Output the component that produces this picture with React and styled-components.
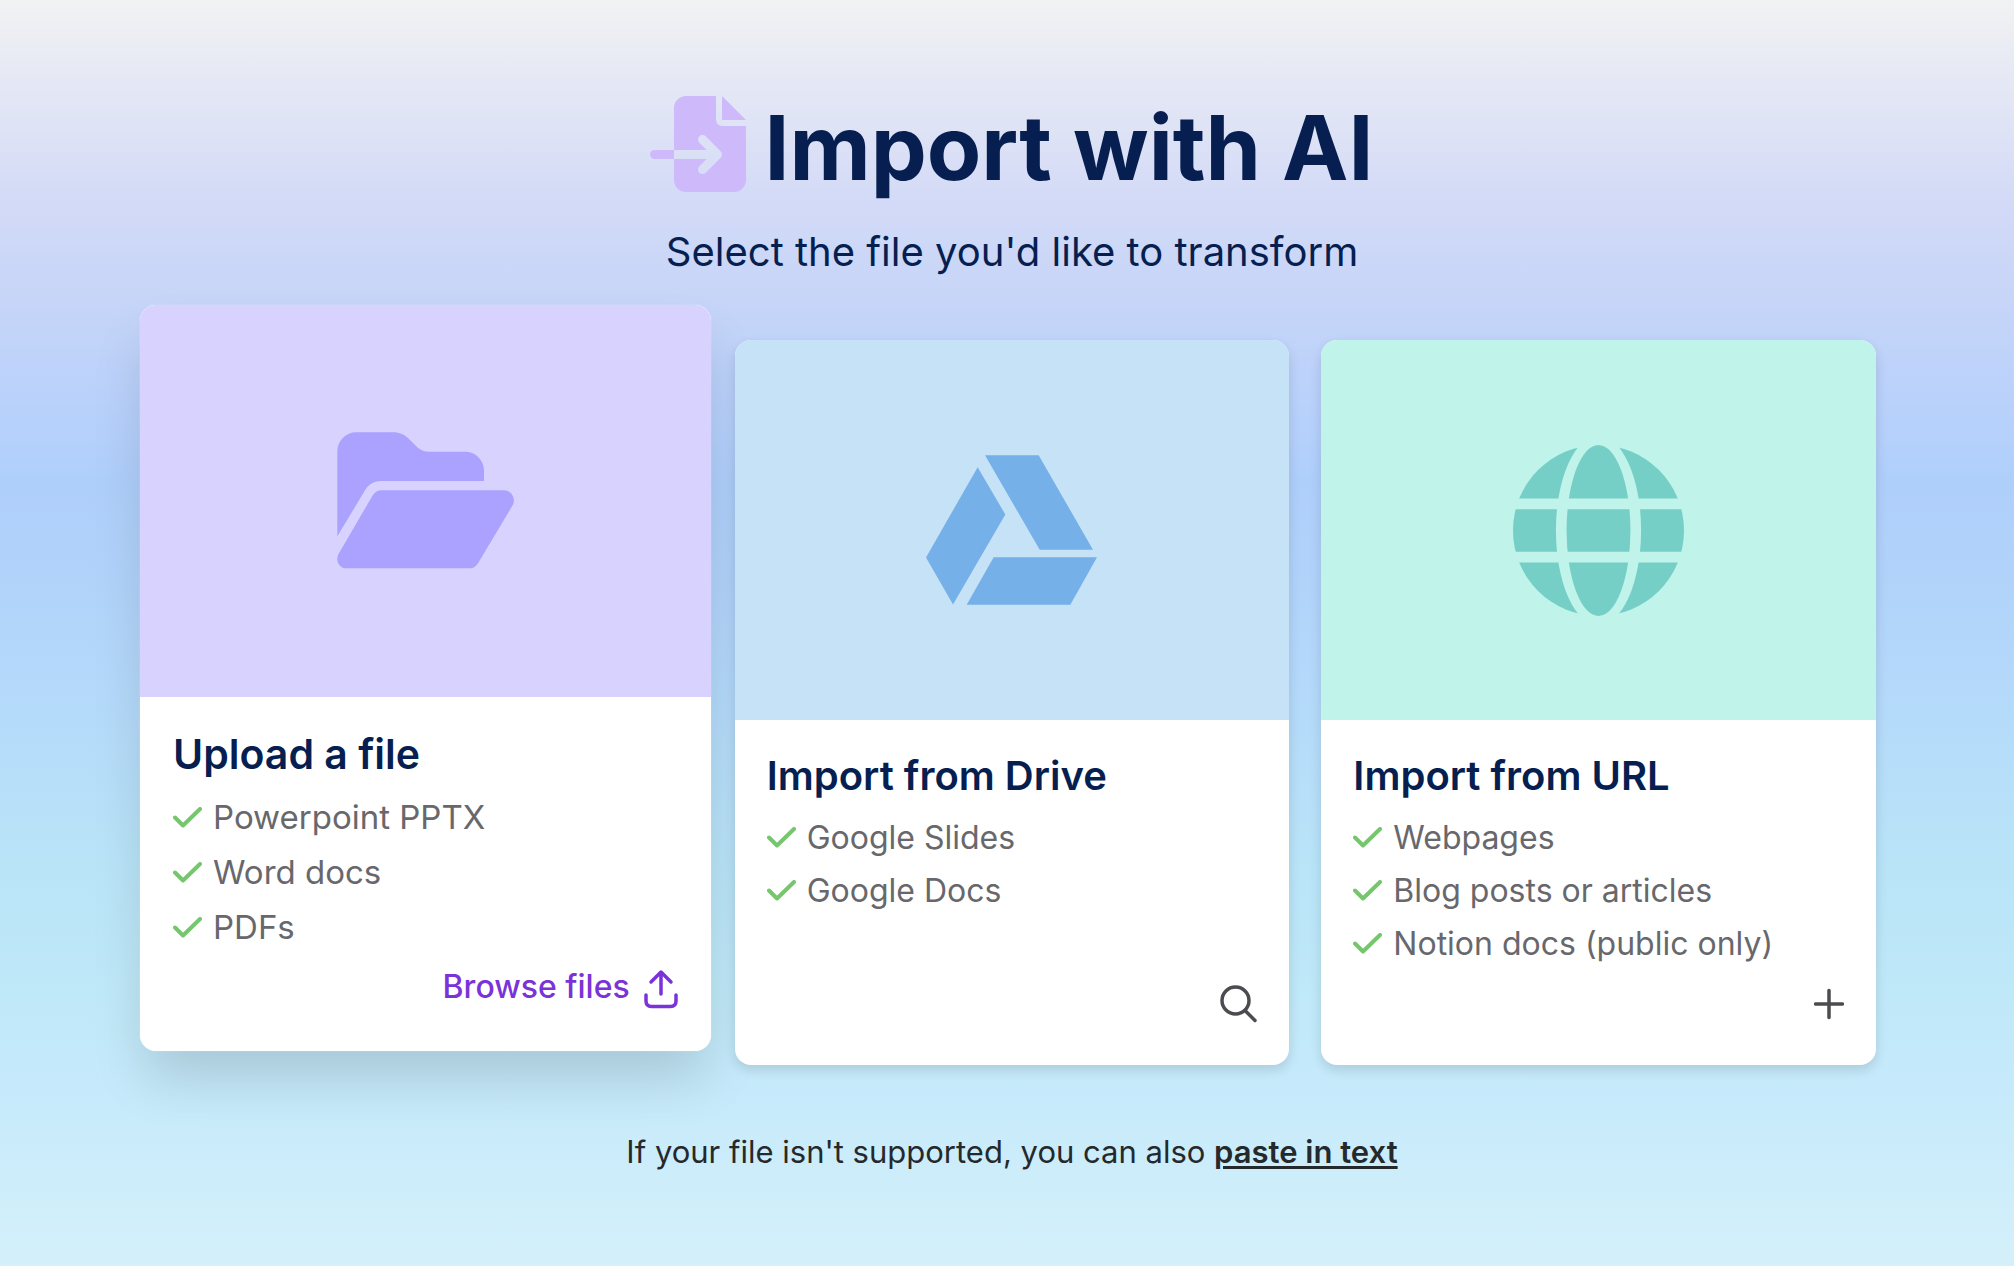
import React from 'react';
import styled, { createGlobalStyle } from 'styled-components';

const GlobalStyle = createGlobalStyle`
  *, *::before, *::after { box-sizing: border-box; }
  body {
    margin: 0;
    font-family: Inter, "Liberation Sans", sans-serif;
    color: #061f50;
  }
`;

const Page = styled.div`
  min-height: 100vh;
  padding: 96px 138px 64px 148px;
  background: linear-gradient(
    180deg,
    #f1f2f3 0%,
    #d3daf7 16%,
    #c4d4f8 25%,
    #b7d1fc 33%,
    #afcffb 38%,
    #b1d3fa 46%,
    #b5dbfa 57%,
    #b9e4f8 68%,
    #bee8f8 77%,
    #c6eafb 86%,
    #d4f0fa 100%
  );
`;

const Header = styled.header`
  display: flex;
  flex-direction: column;
  align-items: center;
  gap: 28px;
`;

const TitleRow = styled.div`
  display: flex;
  align-items: flex-start;
  gap: 18px;
`;

const Title = styled.h1`
  margin: 0;
  font-size: 89px;
  font-weight: 700;
  line-height: 104px;
`;

const Subtitle = styled.p`
  margin: 0;
  font-size: 40px;
  line-height: 48px;
`;

const Cards = styled.main`
  display: grid;
  grid-template-columns: repeat(3, minmax(0, 1fr));
  gap: 32px;
  margin-top: 64px;
`;

const Card = styled.section`
  display: flex;
  flex-direction: column;
  overflow: hidden;
  margin: ${(p) => (p.$raised ? '-35px -8px 14px' : '0')};
  background: #fff;
  border-radius: 16px;
  box-shadow: ${(p) =>
    p.$raised
      ? '0 0 1px rgba(255, 255, 255, 0.9), 0 32px 54px -6px rgba(0, 0, 0, 0.15)'
      : '0 5px 12px rgba(0, 0, 0, 0.13)'};
`;

const Artwork = styled.div`
  display: flex;
  align-items: center;
  justify-content: center;
  height: ${(p) => (p.$raised ? 392 : 380)}px;
  background: ${(p) => p.$color};
`;

const Body = styled.div`
  display: flex;
  flex: 1;
  flex-direction: column;
  padding: ${(p) => (p.$raised ? '32px 33px 42px' : '32px 32px 40px')};
`;

const CardTitle = styled.h2`
  margin: 0;
  font-size: ${(p) => (p.$raised ? 41 : 40)}px;
  font-weight: 600;
  line-height: ${(p) => (p.$raised ? 50 : 48)}px;
`;

const Formats = styled.ul`
  margin: 11px 0 ${(p) => (p.$raised ? 10 : 11)}px;
  padding: 0;
  list-style: none;
  color: #68686c;
  font-size: ${(p) => (p.$raised ? 33 : 32)}px;
  line-height: ${(p) => (p.$raised ? 55 : 53)}px;
`;

const Format = styled.li`
  display: flex;
  align-items: center;
  gap: 11px;
`;

const Action = styled.button`
  display: flex;
  align-items: center;
  align-self: flex-end;
  gap: 14px;
  margin-top: auto;
  padding: 0;
  border: 0;
  background: none;
  color: ${(p) => (p.$raised ? '#7a33d9' : '#4c4b4f')};
  font: inherit;
  font-size: 32px;
  font-weight: 500;
  line-height: 44px;
  height: 44px;
  cursor: pointer;
`;

const Footer = styled.footer`
  margin-top: 67px;
  color: #26292c;
  font-size: 31px;
  line-height: 40px;
  text-align: center;
`;

const FooterLink = styled.a`
  color: inherit;
  font-weight: 600;
  text-decoration: underline;
  text-decoration-thickness: 3px;
  text-underline-offset: 3px;
`;

const ImportIcon = () => (
  <svg width="96" height="96" viewBox="0 0 96 96" fill="#cebafb" aria-hidden="true">
    <mask id="import-arrow">
      <rect width="96" height="96" fill="#fff" />
      <path
        d="M24 58.5H66M52.5 43.5l15 15-15 15"
        fill="none"
        stroke="#000"
        strokeWidth="9"
        strokeLinecap="round"
        strokeLinejoin="round"
      />
    </mask>
    <path
      mask="url(#import-arrow)"
      d="M36 0H66V24a6 6 0 0 0 6 6H96V84a12 12 0 0 1-12 12H36a12 12 0 0 1-12-12V12A12 12 0 0 1 36 0Z"
    />
    <path d="M72 0 96 24H72ZM4.500 54H24v9H4.500a4.500 4.500 0 0 1 0-9Z" />
  </svg>
);

const FolderIcon = () => (
  <svg width="177" height="136" viewBox="81 98 531 408" fill="#aba1fe" overflow="visible" aria-hidden="true">
    <path d="M82 408V154A57 57 0 0 1 139 96H250C268 96 284 103 296 115L313 132C327 147 338 154 355 154H464A57 57 0 0 1 522 212V242H214C194 242 176 252 166 268Z" />
    <path d="M214 270H582C606 270 620 298 606 318L504 489Q495 504 480 504H110C87 504 75 480 86 460L187 287Q197 270 214 270Z" />
  </svg>
);

const DriveIcon = () => (
  <svg width="171" height="150" viewBox="79 75 513 449" fill="#76b0e8" aria-hidden="true">
    <path d="M256 75H417L580 359H420ZM234 111 317 253 160 523 79 382ZM282 381H592L512 524H201Z" />
  </svg>
);

const GlobeIcon = () => (
  <svg width="171" height="171" viewBox="0 0 514 514" aria-hidden="true">
    <mask id="globe-lines">
      <rect width="514" height="514" fill="#fff" />
      <ellipse cx="257" cy="257" rx="128" ry="285" fill="#000" />
      <ellipse cx="257" cy="257" rx="96" ry="257" fill="#fff" />
      <path d="M0 161H514V193H0ZM0 321H514V353H0Z" fill="#000" />
    </mask>
    <circle cx="257" cy="257" r="257" fill="#75cfc6" mask="url(#globe-lines)" />
  </svg>
);

const CheckIcon = () => (
  <svg
    width="29"
    height="21"
    viewBox="0 0 29 21"
    fill="none"
    stroke="#75c66d"
    strokeWidth="4"
    strokeLinecap="round"
    strokeLinejoin="round"
    aria-hidden="true"
  >
    <path d="M2 10.500 10 18.500 27 2" />
  </svg>
);

const LineIcon = ({ width, d, children }) => (
  <svg
    width={width}
    height="44"
    viewBox={`0 0 ${width} 44`}
    fill="none"
    stroke="currentColor"
    strokeWidth="3.5"
    strokeLinecap="round"
    strokeLinejoin="round"
    aria-hidden="true"
  >
    {children}
    <path d={d} />
  </svg>
);

const UploadIcon = () => (
  <LineIcon width={34} d="M17 29V7M7 17 17 7 27 17M2 30V36Q2 41.500 7.500 41.500H26.500Q32 41.500 32 36V30" />
);

const SearchIcon = () => (
  <LineIcon width={37} d="M25.500 30 35 39.500">
    <circle cx="15.500" cy="19.500" r="13.500" />
  </LineIcon>
);

const PlusIcon = () => <LineIcon width={30} d="M15 9.500V36.500M1.500 23H28.500" />;

const sources = [
  {
    title: 'Upload a file',
    formats: ['Powerpoint PPTX', 'Word docs', 'PDFs'],
    color: '#d8d2fe',
    Art: FolderIcon,
    action: 'Browse files',
    ActionIcon: UploadIcon,
    raised: true,
  },
  {
    title: 'Import from Drive',
    formats: ['Google Slides', 'Google Docs'],
    color: '#c6e2f7',
    Art: DriveIcon,
    label: 'Search Drive',
    ActionIcon: SearchIcon,
  },
  {
    title: 'Import from URL',
    formats: ['Webpages', 'Blog posts or articles', 'Notion docs (public only)'],
    color: '#c0f3ea',
    Art: GlobeIcon,
    label: 'Add URL',
    ActionIcon: PlusIcon,
  },
];

const SourceCard = ({ title, formats, color, Art, action, label, ActionIcon, raised }) => (
  <Card $raised={raised}>
    <Artwork $color={color} $raised={raised}>
      <Art />
    </Artwork>
    <Body $raised={raised}>
      <CardTitle $raised={raised}>{title}</CardTitle>
      <Formats $raised={raised}>
        {formats.map((format) => (
          <Format key={format}>
            <CheckIcon />
            {format}
          </Format>
        ))}
      </Formats>
      <Action type="button" $raised={raised} aria-label={label}>
        {action}
        <ActionIcon />
      </Action>
    </Body>
  </Card>
);

export default function App() {
  return (
    <>
      <GlobalStyle />
      <Page>
        <Header>
          <TitleRow>
            <ImportIcon />
            <Title>Import with AI</Title>
          </TitleRow>
          <Subtitle>Select the file you'd like to transform</Subtitle>
        </Header>
        <Cards>
          {sources.map((source) => (
            <SourceCard key={source.title} {...source} />
          ))}
        </Cards>
        <Footer>
          If your file isn't supported, you can also <FooterLink href="#paste">paste in text</FooterLink>
        </Footer>
      </Page>
    </>
  );
}
